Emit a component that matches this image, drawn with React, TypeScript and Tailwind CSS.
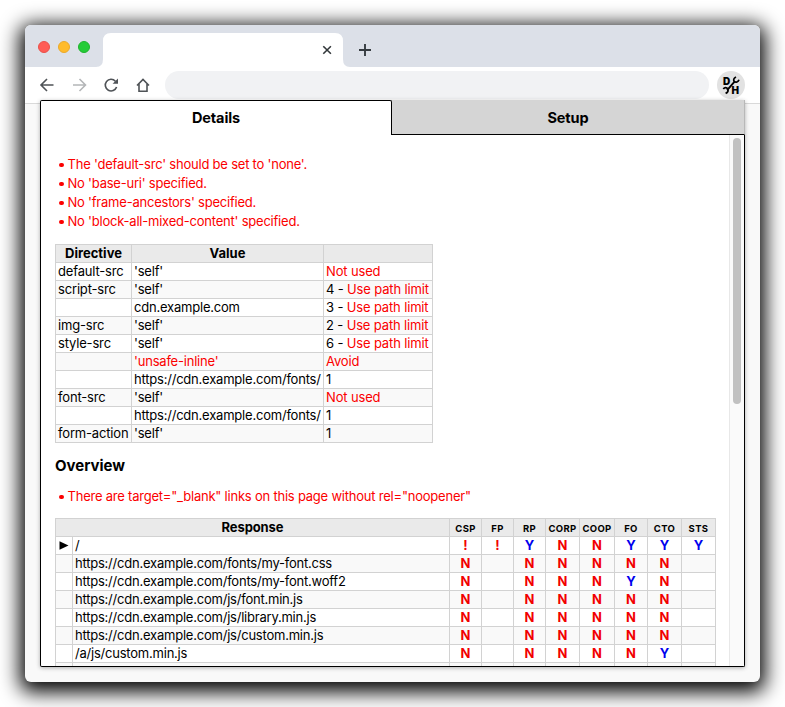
import React from "react";

const warnings = [
  "The 'default-src' should be set to 'none'.",
  "No 'base-uri' specified.",
  "No 'frame-ancestors' specified.",
  "No 'block-all-mixed-content' specified.",
];

type Directive = { name: string; value: string; count?: string; note?: string; bad?: boolean };

const directives: Directive[] = [
  { name: "default-src", value: "'self'", note: "Not used" },
  { name: "script-src", value: "'self'", count: "4", note: "Use path limit" },
  { name: "", value: "cdn.example.com", count: "3", note: "Use path limit" },
  { name: "img-src", value: "'self'", count: "2", note: "Use path limit" },
  { name: "style-src", value: "'self'", count: "6", note: "Use path limit" },
  { name: "", value: "'unsafe-inline'", note: "Avoid", bad: true },
  { name: "", value: "https://cdn.example.com/fonts/", count: "1" },
  { name: "font-src", value: "'self'", note: "Not used" },
  { name: "", value: "https://cdn.example.com/fonts/", count: "1" },
  { name: "form-action", value: "'self'", count: "1" },
];

const headers = ["CSP", "FP", "RP", "CORP", "COOP", "FO", "CTO", "STS"];

const responses: [string, string][] = [
  ["/", "!!YNNYYY"],
  ["https://cdn.example.com/fonts/my-font.css", "N NNNNN "],
  ["https://cdn.example.com/fonts/my-font.woff2", "N NNNYN "],
  ["https://cdn.example.com/js/font.min.js", "N NNNNN "],
  ["https://cdn.example.com/js/library.min.js", "N NNNNN "],
  ["https://cdn.example.com/js/custom.min.js", "N NNNNN "],
  ["/a/js/custom.min.js", "N NNNNY "],
  ["", "        "],
];

const cell = "h-[18px] border-r border-b border-[#d2d2d2] leading-[17px] whitespace-nowrap";

function Bullets({ items }: { items: string[] }) {
  return (
    <ul className="tracking-[-0.22px] text-[#fb0000]">
      {items.map((t) => (
        <li key={t} className="flex h-[19px] items-center whitespace-nowrap">
          <span className="mt-px mr-[4px] ml-[4px] h-[4.5px] w-[4.5px] rounded-full bg-[#fb0000]" />
          <span>{t}</span>
        </li>
      ))}
    </ul>
  );
}

function DirectiveTable() {
  return (
    <div className="grid w-[378px] grid-cols-[76px_192px_109px] border-t border-l border-[#d2d2d2]">
      {["Directive", "Value", ""].map((h, i) => (
        <div key={i} className={`${cell} bg-[#eaeaea] text-center font-bold`}>{h}</div>
      ))}
      {directives.map((d, i) => {
        const bg = i % 2 ? "bg-[#f9f9f9]" : "bg-white";
        return (
          <React.Fragment key={i}>
            <div className={`${cell} ${bg} pl-[2px] tracking-[-0.17px]`}>{d.name}</div>
            <div className={`${cell} ${bg} pl-[2px] tracking-[-0.21px] ${d.bad ? "text-[#fb0000]" : ""}`}>{d.value}</div>
            <div className={`${cell} ${bg} pl-[2px] tracking-[-0.15px]`}>
              {d.count}
              {d.count && d.note ? " - " : ""}
              <span className="text-[#fb0000]">{d.note}</span>
            </div>
          </React.Fragment>
        );
      })}
    </div>
  );
}

function ResponseTable() {
  return (
    <div className="grid w-[661px] grid-cols-[17px_377px_32px_32px_32px_34px_35px_33px_34px_34px] border-t border-l border-[#d2d2d2]">
      <div className={`${cell} col-span-2 bg-[#eaeaea] text-center font-bold tracking-[-0.1px]`}>Response</div>
      {headers.map((h) => (
        <div key={h} className={`${cell} bg-[#eaeaea] pt-px text-center text-[9.5px] font-bold tracking-[0.35px]`}>{h}</div>
      ))}
      {responses.map(([url, flags], i) => {
        const bg = i % 2 ? "bg-[#f9f9f9]" : "bg-white";
        return (
          <React.Fragment key={i}>
            <div className={`${cell} ${bg} flex items-center pl-[3px]`}>
              {i === 0 && (
                <svg width="10" height="9" viewBox="0 0 10 9"><path d="M0.5 0.3 9.5 4.5 0.5 8.7z" /></svg>
              )}
            </div>
            <div className={`${cell} ${bg} pl-[2px] tracking-[-0.22px]`}>{url}</div>
            {flags.split("").map((f, j) => (
              <div key={j} className={`${cell} ${bg} text-center font-bold ${f === "Y" ? "text-[#0000ee]" : "text-[#f20000]"}`}>{f}</div>
            ))}
          </React.Fragment>
        );
      })}
    </div>
  );
}

function TabStrip() {
  return (
    <div className="flex h-[42px] bg-[#dce0e8]">
      <div className="flex w-[78px] gap-[8px] pt-[15.5px] pl-[13px]">
        <span className="h-[12px] w-[12px] rounded-full border border-[#e9514a] bg-[#ff5c56]" />
        <span className="h-[12px] w-[12px] rounded-full border border-[#eba92a] bg-[#ffbb2b]" />
        <span className="h-[12px] w-[12px] rounded-full border border-[#1fb32d] bg-[#24cc37]" />
      </div>
      <svg className="-ml-[7px] mt-[8px]" width="254" height="34" viewBox="0 0 254 34">
        <path d="M0 34Q7 34 7 26V8Q7 0 15 0H239Q247 0 247 8V26Q247 34 254 34z" fill="#fff" />
        <path d="M227.3 13.2 234.9 20.8M234.9 13.2 227.3 20.8" stroke="#33383b" strokeWidth="1.6" />
      </svg>
      <svg className="mt-[19px] ml-[9px]" width="12" height="12" viewBox="0 0 12 12">
        <path d="M6 0V12M0 6H12" stroke="#353b40" strokeWidth="1.9" />
      </svg>
    </div>
  );
}

function Toolbar() {
  return (
    <div className="flex h-[37px] items-center border-b border-[#d9d9d9] bg-white">
      <svg width="140" height="36" viewBox="0 0 140 36" fill="none" stroke="#4f5357" strokeWidth="1.6">
        <path d="M28.5 18H16.5M22 12 16 18 22 24" />
        <path d="M48 18H60M54.5 12 60.5 18 54.5 24" stroke="#b4b6b8" />
        <path d="M90.4 14.2A5.8 5.8 0 1 0 91.6 20" />
        <path d="M93 11.5V16.7H87.6z" fill="#4f5357" stroke="none" />
        <path d="M112 18.5 118 12.5 124 18.5M114 17V24.2H122V17" strokeWidth="1.6" />
      </svg>
      <div className="h-[28px] w-[544px] rounded-full bg-[#f1f2f4]" />
      <div className="ml-[8px] h-[28px] w-[28px] rounded-full bg-[#e2e2e2]">
        <div className="relative h-full w-full font-black leading-none text-black">
          <span className="absolute top-[5px] left-[6px] text-[10px]">D</span>
          <svg className="absolute inset-0" width="28" height="28" viewBox="0 0 28 28" fill="none" stroke="#000">
            <path d="M10.2 19.2 18 10.2" strokeWidth="1.9" />
            <path d="M19 6C16.6 7.2 16 9.4 17.4 10.6C18.8 11.8 21.2 11 22 8.8" strokeWidth="1.7" />
            <path d="M6.3 18C7.6 16.2 9.8 16.4 10.6 17.8C11.4 19.4 10.6 21.4 8.6 22.4" strokeWidth="1.8" />
          </svg>
          <span className="absolute top-[13.5px] left-[14.5px] text-[10px]">H</span>
        </div>
      </div>
    </div>
  );
}

export default function App() {
  return (
    <div className="h-[707px] w-[785px] overflow-hidden bg-white p-[25px] font-['Inter','Noto_Sans',sans-serif] text-[13px] text-black">
      <div className="h-[657px] w-[735px] rounded-[6px] bg-[#f9f9f9] shadow-[0_5px_20px_5px_#000]">
        <div className="overflow-hidden rounded-t-[6px]">
          <TabStrip />
          <Toolbar />
        </div>
        <div className="relative -mt-[4px] ml-[15px] flex h-[567px] w-[705px] flex-col rounded-[2px] bg-white shadow-[0_1px_4px_rgba(0,0,0,0.3)]">
          <div className="flex h-[35px] shrink-0 text-center text-[14.5px] leading-[35px] font-bold tracking-[-0.1px]">
            <div className="w-[352px] rounded-t-[2px] border-t border-r border-l border-black leading-[33px]">Details</div>
            <div className="w-[353px] border-r border-b border-r-[#b8b8b8] border-b-black bg-[#d5d5d5]">Setup</div>
          </div>
          <div className="flex min-h-0 flex-1 overflow-hidden rounded-b-[2px] border-r border-b border-l border-black">
            <div className="w-[688px] overflow-hidden pt-[20px] pl-[14px]">
              <Bullets items={warnings} />
              <div className="h-[13px]" />
              <DirectiveTable />
              <h2 className="mt-[13px] mb-[11px] h-[20px] text-[15px] leading-[20px] font-bold">Overview</h2>
              <Bullets items={['There are target="_blank" links on this page without rel="noopener"']} />
              <div className="h-[12px]" />
              <ResponseTable />
            </div>
            <div className="flex flex-1 justify-center border-l border-[#e8e8e8] bg-[#fafafa] pt-[3px]">
              <div className="h-[266px] w-[8px] rounded-full bg-[#c1c1c1]" />
            </div>
          </div>
        </div>
      </div>
    </div>
  );
}
